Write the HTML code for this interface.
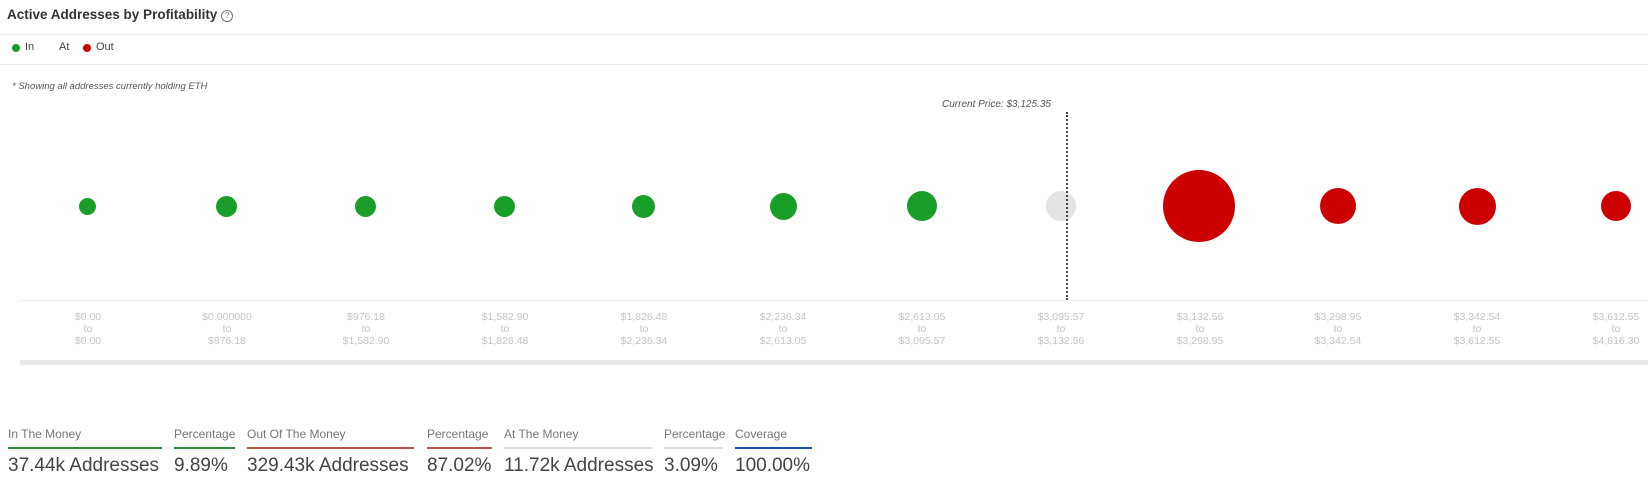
<!DOCTYPE html>
<html><head><meta charset="utf-8"><style>
body{margin:0;width:1648px;height:480px;background:#fff;font-family:"Liberation Sans",sans-serif;position:relative;overflow:hidden;color:#333}
.a{position:absolute;white-space:nowrap}
.lbl{position:absolute;top:311px;width:120px;margin-left:-60px;text-align:center;font-size:10.5px;line-height:12px;color:#c4c4c4}
.dot{position:absolute;border-radius:50%}
.col{position:absolute;top:427px}
.col .t{font-size:12px;color:#777;height:16px}
.col .u{height:2px;margin-top:4px}
.col .v{font-size:19px;color:#444;margin-top:6px;white-space:nowrap}
</style></head><body>
<div class="a" style="left:7px;top:7px;font-size:13.5px;font-weight:bold;color:#333">Active Addresses by Profitability <span style="display:inline-block;width:10px;height:10px;border:1px solid #777;border-radius:50%;font-size:8px;font-weight:normal;text-align:center;line-height:10px;vertical-align:1px;color:#777">?</span></div>
<div class="a" style="left:0;top:34px;width:1648px;height:1px;background:#eee"></div>
<div class="a" style="left:12px;top:44px;width:8px;height:8px;border-radius:50%;background:#1a9e2a"></div>
<div class="a" style="left:25px;top:41px;font-size:11px;color:#444">In</div>
<div class="a" style="left:59px;top:41px;font-size:11px;color:#444">At</div>
<div class="a" style="left:83px;top:44px;width:8px;height:8px;border-radius:50%;background:#cc0000"></div>
<div class="a" style="left:96px;top:41px;font-size:11px;color:#444">Out</div>
<div class="a" style="left:0;top:64px;width:1648px;height:1px;background:#eee"></div>
<div class="a" style="left:12px;top:81px;font-size:9.5px;font-style:italic;color:#555">* Showing all addresses currently holding ETH</div>
<div class="a" style="left:942px;top:99px;font-size:10px;font-style:italic;color:#555">Current Price: $3,125.35</div>
<div class="a" style="left:20px;top:300px;width:1628px;height:1px;background:#eee"></div>
<div class="a" style="left:20px;top:360px;width:1628px;height:5px;background:#e8e8e8"></div>
<div class="dot" style="left:78.5px;top:197.5px;width:17px;height:17px;background:#1a9e2a"></div>
<div class="dot" style="left:215.5px;top:195.5px;width:21px;height:21px;background:#1a9e2a"></div>
<div class="dot" style="left:354.5px;top:195.5px;width:21px;height:21px;background:#1a9e2a"></div>
<div class="dot" style="left:493.5px;top:195.5px;width:21px;height:21px;background:#1a9e2a"></div>
<div class="dot" style="left:631.5px;top:194.5px;width:23px;height:23px;background:#1a9e2a"></div>
<div class="dot" style="left:769.5px;top:192.5px;width:27px;height:27px;background:#1a9e2a"></div>
<div class="dot" style="left:907px;top:191px;width:30px;height:30px;background:#1a9e2a"></div>
<div class="dot" style="left:1046px;top:191px;width:30px;height:30px;background:#e3e3e3"></div>
<div class="a" style="left:1066px;top:112px;height:188px;border-left:2px dotted #444"></div>
<div class="dot" style="left:1163px;top:170px;width:72px;height:72px;background:#cc0000"></div>
<div class="dot" style="left:1320px;top:188px;width:36px;height:36px;background:#cc0000"></div>
<div class="dot" style="left:1458.5px;top:187.5px;width:37px;height:37px;background:#cc0000"></div>
<div class="dot" style="left:1601px;top:191px;width:30px;height:30px;background:#cc0000"></div>
<div class="lbl" style="left:88px">$0.00<br>to<br>$0.00</div>
<div class="lbl" style="left:227px">$0.000000<br>to<br>$976.18</div>
<div class="lbl" style="left:366px">$976.18<br>to<br>$1,582.90</div>
<div class="lbl" style="left:505px">$1,582.90<br>to<br>$1,826.48</div>
<div class="lbl" style="left:644px">$1,826.48<br>to<br>$2,236.34</div>
<div class="lbl" style="left:783px">$2,236.34<br>to<br>$2,613.05</div>
<div class="lbl" style="left:922px">$2,613.05<br>to<br>$3,095.57</div>
<div class="lbl" style="left:1061px">$3,095.57<br>to<br>$3,132.56</div>
<div class="lbl" style="left:1200px">$3,132.56<br>to<br>$3,298.95</div>
<div class="lbl" style="left:1338px">$3,298.95<br>to<br>$3,342.54</div>
<div class="lbl" style="left:1477px">$3,342.54<br>to<br>$3,612.55</div>
<div class="lbl" style="left:1616px">$3,612.55<br>to<br>$4,816.30</div>
<div class="col" style="left:8px;width:154px"><div class="t">In The Money</div><div class="u" style="background:#2e8b3e"></div><div class="v">37.44k Addresses</div></div>
<div class="col" style="left:174px;width:61px"><div class="t">Percentage</div><div class="u" style="background:#2e8b3e"></div><div class="v">9.89%</div></div>
<div class="col" style="left:247px;width:167px"><div class="t">Out Of The Money</div><div class="u" style="background:#b5574d"></div><div class="v">329.43k Addresses</div></div>
<div class="col" style="left:427px;width:65px"><div class="t">Percentage</div><div class="u" style="background:#b5574d"></div><div class="v">87.02%</div></div>
<div class="col" style="left:504px;width:148px"><div class="t">At The Money</div><div class="u" style="background:#ddd"></div><div class="v">11.72k Addresses</div></div>
<div class="col" style="left:664px;width:59px"><div class="t">Percentage</div><div class="u" style="background:#ddd"></div><div class="v">3.09%</div></div>
<div class="col" style="left:735px;width:77px"><div class="t">Coverage</div><div class="u" style="background:#1f4fa0"></div><div class="v">100.00%</div></div>
</body></html>
